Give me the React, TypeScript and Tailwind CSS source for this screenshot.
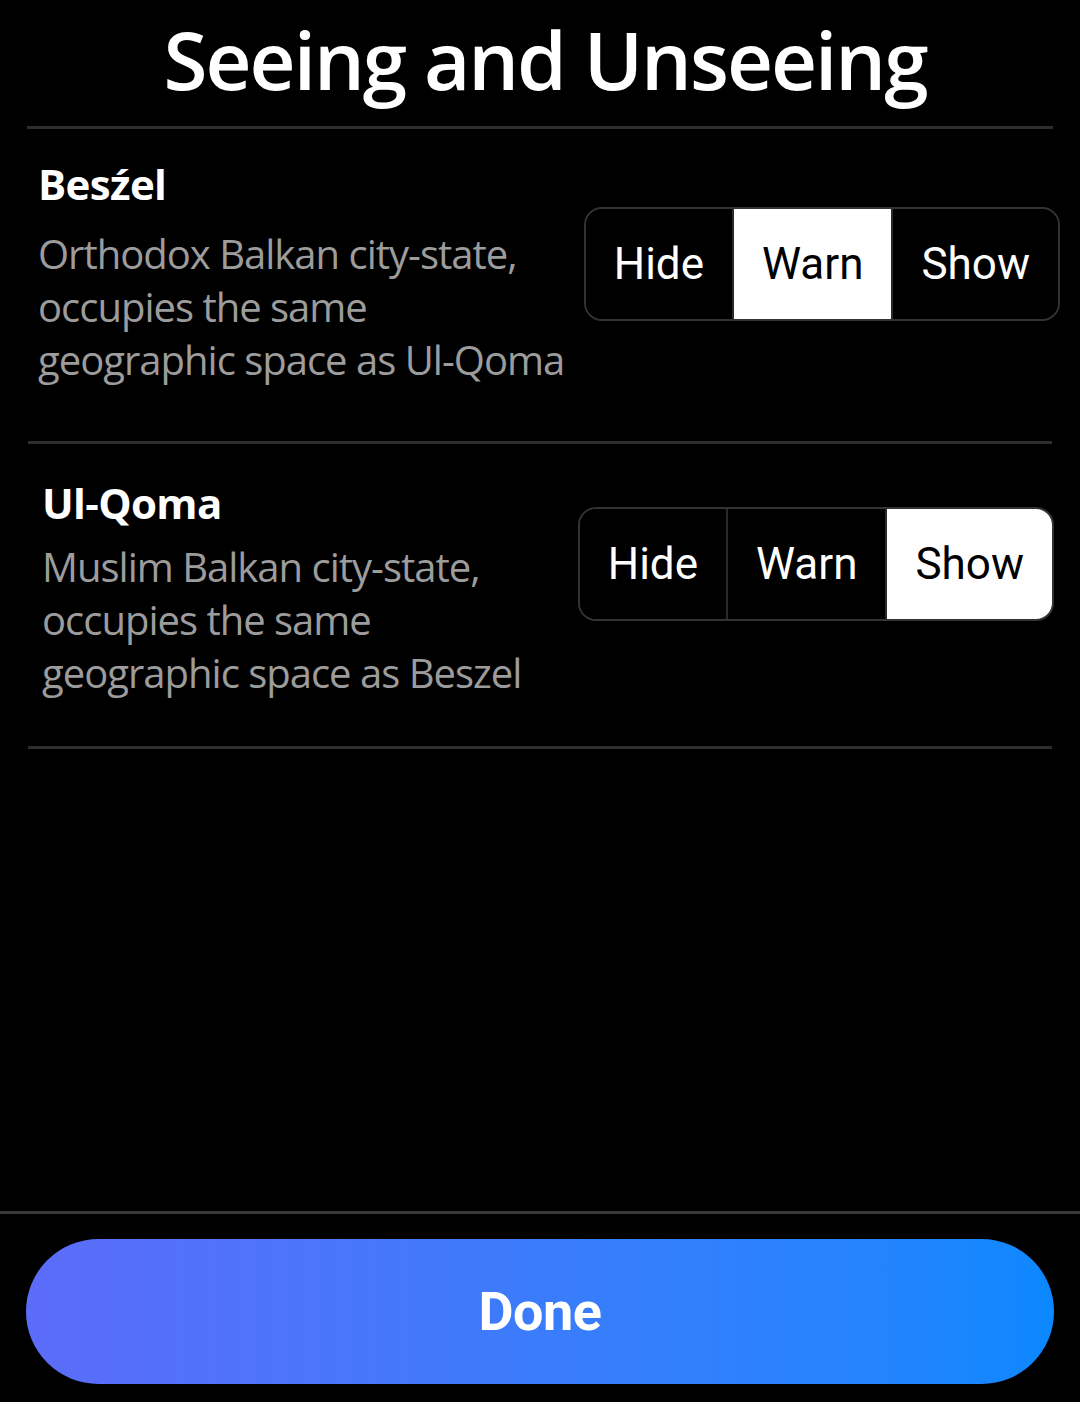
import React from 'react';

type Choice = 'Hide' | 'Warn' | 'Show';

const cities: {
    name: string;
    lines: string[];
    value: Choice;
    row: string;
    titleGap: string;
    controlTop: string;
}[] = [
    {
        name: 'Besźel',
        lines: ['Orthodox Balkan city-state,', 'occupies the same', 'geographic space as Ul-Qoma'],
        value: 'Warn',
        row: 'pl-[38px] pr-[20px] pt-[29px] pb-[55px]',
        titleGap: 'mb-[17px]',
        controlTop: 'mt-[49px]',
    },
    {
        name: 'Ul-Qoma',
        lines: ['Muslim Balkan city-state,', 'occupies the same', 'geographic space as Beszel'],
        value: 'Show',
        row: 'pl-[42px] pr-[26px] pt-[33px] pb-[47px]',
        titleGap: 'mb-[11px]',
        controlTop: 'mt-[30px]',
    },
];

const choices: Choice[] = ['Hide', 'Warn', 'Show'];

function Segmented({ value }: { value: Choice }) {
    return (
        <div className="flex h-[114px] rounded-[18px] border-2 border-[#333] overflow-hidden font-['Roboto',sans-serif]">
            {choices.map((c, i) => (
                <div
                    key={c}
                    className={
                        'flex items-center justify-center px-[28px] text-[44px] ' +
                        (i > 0 ? 'border-l-2 border-[#2a2a2a] ' : '') +
                        (c === value ? 'bg-white text-black' : 'bg-black text-white')
                    }
                >
                    {c}
                </div>
            ))}
        </div>
    );
}

export default function App() {
    return (
        <div className="h-[1402px] w-full bg-black flex flex-col font-['Open_Sans',sans-serif] text-white">
            {/* Header */}
            <div className="h-[126px] flex items-center justify-center pl-[10px]">
                <h1 className="text-[80px] font-semibold leading-none tracking-[-0.025em] -mt-[8px]">
                    Seeing and Unseeing
                </h1>
            </div>
            <div className="mx-[27px] h-[3px] bg-[#2e2e2e]" />

            {/* Cities */}
            {cities.map((city) => (
                <div key={city.name}>
                    <div className={'flex justify-between ' + city.row}>
                        <div>
                            <h2 className={'text-[42px] font-bold leading-[52px] tracking-[-0.015em] ' + city.titleGap}>
                                {city.name}
                            </h2>
                            <p className="text-[40px] leading-[53px] text-[#9c9c9c] tracking-[-0.025em]">
                                {city.lines.map((l) => (
                                    <span key={l} className="block">
                                        {l}
                                    </span>
                                ))}
                            </p>
                        </div>
                        <div className={city.controlTop}>
                            <Segmented value={city.value} />
                        </div>
                    </div>
                    <div className="mx-[28px] h-[3px] bg-[#2e2e2e]" />
                </div>
            ))}

            <div className="flex-1" />

            {/* Footer */}
            <div className="h-[3px] bg-[#3a3a3a]" />
            <div className="px-[26px] pt-[25px] pb-[18px]">
                <button className="w-full h-[145px] rounded-full bg-linear-to-r from-[#5b6cf9] via-[#3a7cfb] to-[#0a88ff] flex items-center justify-center">
                    <span className="font-['Roboto',sans-serif] font-bold text-[54px] text-white tracking-[-0.01em]">
                        Done
                    </span>
                </button>
            </div>
        </div>
    );
}
